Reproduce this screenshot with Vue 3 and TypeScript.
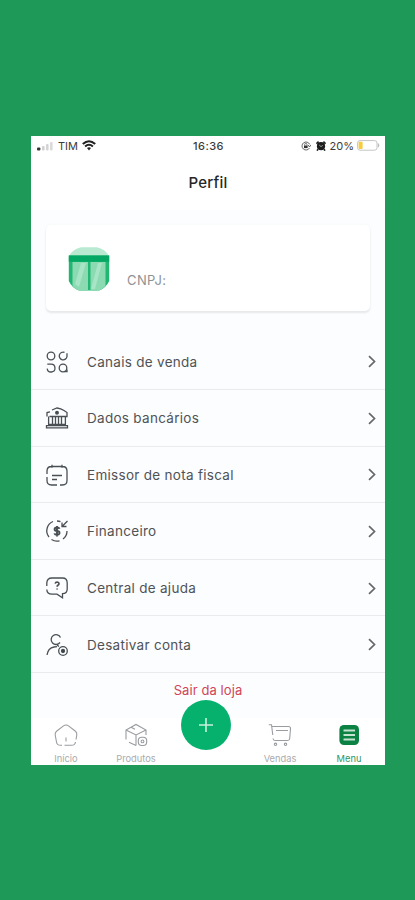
<script setup lang="ts">
interface MenuItem {
  id: string
  label: string
}

const items: MenuItem[] = [
  { id: 'channels', label: 'Canais de venda' },
  { id: 'bank', label: 'Dados bancários' },
  { id: 'invoice', label: 'Emissor de nota fiscal' },
  { id: 'finance', label: 'Financeiro' },
  { id: 'help', label: 'Central de ajuda' },
  { id: 'disable', label: 'Desativar conta' },
]
</script>

<template>
  <div class="page">
    <main class="phone">
      <div class="status">
        <div class="status-left">
          <svg class="signal" viewBox="0 0 17 10">
            <rect x="0" y="6.5" width="3.4" height="3" rx="1" fill="#333" />
            <rect x="5" y="5" width="2.6" height="4.5" rx="1" fill="#d0d0d0" />
            <rect x="9" y="3" width="2.6" height="6.5" rx="1" fill="#d4d4d4" />
            <rect x="13" y="1" width="2.6" height="8.5" rx="1" fill="#dadada" />
          </svg>
          <span class="carrier">TIM</span>
          <svg class="wifi" viewBox="0 0 14 11" fill="none" stroke="#222" stroke-width="2.1">
            <path d="M.8 4.1Q7-1.6 13.2 4.1" />
            <path d="M3.1 6.5Q7 3 10.9 6.5" />
            <path d="M5 8 7 10.4 9 8Q7 6.5 5 8Z" fill="#222" stroke="none" />
          </svg>
        </div>
        <div class="clock">16:36</div>
        <div class="status-right">
          <svg class="lock" viewBox="0 0 10 10" fill="none" stroke="#555">
            <path d="M8.5 7A4 4 0 1 1 8.7 3.4M9.8 4 8.5 6 7.2 4" stroke-width=".9" />
            <rect x="3" y="4.5" width="3.6" height="2.6" fill="#333" stroke="none" />
            <path d="M3.7 4.5V3.4a1.1 1.1 0 0 1 2.2 0v1.1" stroke-width=".8" />
          </svg>
          <svg class="alarm" viewBox="0 0 10 10">
            <circle cx="5" cy="5.2" r="4.1" fill="#1c1c1c" />
            <path d="M.4 2.6 2.6.6M9.6 2.6 7.4.6M2 8.2 1 9.6M8 8.2 9 9.6" stroke="#1c1c1c" stroke-width="1.6" />
            <path d="M3.2 4 5 5.6 6.8 4.4" fill="none" stroke="#bbb" stroke-width=".8" />
          </svg>
          <span class="percent">20%</span>
          <svg class="battery" viewBox="0 0 23 11">
            <rect x=".6" y=".6" width="19.4" height="9.6" rx="2.4" fill="#fff" stroke="#c4c4c4" />
            <rect x="1.6" y="1.7" width="4" height="7.4" rx="1" fill="#f7cb3c" />
            <path d="M21.3 3.6q1.4 1.8 0 3.6z" fill="#aaa" stroke="#aaa" stroke-width=".5" />
          </svg>
        </div>
      </div>

      <header class="title">Perfil</header>

      <div class="content">
        <section class="card">
          <svg class="store" viewBox="0 0 42 44">
            <path d="M1 9Q5 2 13 .3H29Q37 2 41 9Z" fill="#b9ead1" />
            <path d="M.8 8.600H41.200V34Q38 41 31 43.600H11Q4 41 .8 34Z" fill="#22b673" />
            <path d="M4.500 15H20V43.600H11Q7 42 4.500 39Z" fill="#8bdab2" />
            <path d="M22.500 15H37.500V39Q35 42 31 43.600H22.500Z" fill="#8bdab2" />
            <path d="M13 16H18L11 40 7 37ZM30 16H34L27 42H23Z" fill="#a8e4c6" />
            <path d="M.8 8.600H41.200V14.800H.8Z" fill="#05a765" />
          </svg>
          <span class="cnpj">CNPJ:</span>
        </section>

        <nav class="menu">
          <a v-for="item in items" :key="item.id" class="row">
            <svg class="icon" viewBox="0 0 24 24">
              <g v-if="item.id === 'channels'">
                <circle cx="6" cy="6" r="3.800" />
                <path d="M19.500 2.300A3.900 3.900 0 1 0 22 6.500V3.200" />
                <path d="M2.300 14.200H6a3.900 3.900 0 1 1-3.800 4.400" />
                <circle cx="18" cy="18" r="3.800" />
                <path d="M19.500 21.700H22V19.500" />
              </g>
              <g v-else-if="item.id === 'bank'">
                <path d="M2 10.500V6.500l3-.6M7 4l5-2q4 .5 7 2.500l3 2v4H4.500M3.600 10.500V18M7.500 10.500V18M10.500 10.500V18M13.500 10.500V18M16.500 10.500V18M20.400 10.500V18M3 18.300h18M1.500 21.800h21v-2.200H1.500z" />
                <circle cx="12" cy="6.800" r="1.300" fill="#333940" />
              </g>
              <g v-else-if="item.id === 'invoice'">
                <path d="M2 11V8q0-4.500 4.500-4.500h11Q22 3.500 22 8v9.500q0 4.500-4.500 4.500H15M12 22H6.500Q2 22 2 17.500V14M7 1.800v3M17 1.800v3M7 12.500h10M7 16.500h5" />
              </g>
              <g v-else-if="item.id === 'finance'">
                <path d="M8 2.500A10 10 0 0 0 4 18M6.500 20.500a10 10 0 0 0 8 1.300M18 20a10 10 0 0 0 4-8M12 2q2 0 3.500.7M22.500 2 17 7.500M17 3.500v4h4.500" />
                <path d="M14.600 9.800q-.7-1.300-2.600-1.300-2.400 0-2.400 1.700t2.400 1.800 2.500 1.900-2.500 1.800q-2 0-2.700-1.400M12 7v10.500" stroke-width="1.900" />
              </g>
              <g v-else-if="item.id === 'help'">
                <path d="M1.800 10V7Q2 2 7 2h10.500q4.700 0 4.700 5v6q0 4.700-4.700 4.700v4L12 18.200H7Q2 18 1.800 13.500" />
                <path d="M10.200 7.600q.3-1.600 2-1.600 1.800.1 1.800 1.700 0 .9-1.100 1.500-.8.600-.8 1.500M12.100 12.400v1" stroke-width="1.700" />
              </g>
              <g v-else>
                <path d="M15.500 4.500A4.900 4.900 0 1 0 15 9.500M2 22q1-7 7-8l3-.4M12 12l2 1.500" />
                <circle cx="18" cy="18" r="4.300" />
                <circle cx="18" cy="18" r="1.500" fill="#333940" />
              </g>
            </svg>
            <span class="label">{{ item.label }}</span>
            <svg class="chevron" viewBox="0 0 8 13"><path d="M1 1.200 6.500 6.500 1 11.800" /></svg>
          </a>
        </nav>
        <div class="logout">Sair da loja</div>
      </div>

      <footer class="tabs">
        <div class="tab">
          <svg class="tab-icon" viewBox="0 0 24 24">
            <path d="M8 22.300H6.500Q3 22.300 2.500 19L1.200 12Q.8 9.500 2.800 8L9.500 2.900Q12 1 14.500 2.900L21.200 8Q23.200 9.500 22.800 12L22 16.500M21.500 19Q21 22.300 17.500 22.300H10.500M12 14.500v4" />
          </svg>
          <span>Início</span>
        </div>
        <div class="tab">
          <svg class="tab-icon" viewBox="0 0 24 24">
            <path d="M12 22.500 5 19.300M2 16.500V7L12 1.500 22 7v5M2 7l10 5L22 7M7 4.300l4 2M12 12v10.500" />
            <rect x="14.300" y="14.300" width="8.400" height="8.200" rx="3.500" />
            <circle cx="18.500" cy="18.400" r="1.400" />
          </svg>
          <span>Produtos</span>
        </div>
        <div class="tab middle">
          <button class="add" aria-label="+">
            <svg viewBox="0 0 14 14"><path d="M7 0v14M0 7h14" /></svg>
          </button>
        </div>
        <div class="tab">
          <svg class="tab-icon" viewBox="0 0 24 24">
            <path d="M.8 1.800h2.700L4.800 12M5 15.500Q5.200 17.500 7 17.500H19.500Q21.500 17.500 21.700 15.500L22.500 5.500Q22.500 3.500 20.500 3.500H4M8 7.500h12" />
            <circle cx="7.500" cy="21.300" r="1.200" />
            <circle cx="17.500" cy="21.300" r="1.200" />
          </svg>
          <span>Vendas</span>
        </div>
        <div class="tab active">
          <svg class="tab-icon" viewBox="0 0 24 24">
            <rect x="2.400" y="2" width="19.600" height="20" rx="4.500" fill="#0b8142" stroke="none" />
            <path d="M6.500 7.500H18M6.500 12H18M6.500 16.500H18" stroke="#c4e4d1" stroke-width="1.800" />
          </svg>
          <span>Menu</span>
        </div>
      </footer>
    </main>
  </div>
</template>

<style>
body {
  background: #1f9958;
}
</style>

<style scoped>
.page {
  box-sizing: border-box;
  height: 900px;
  padding: 136px 30px 135px 31px;
  background: #1f9958;
  font-family: Inter, sans-serif;
}
.phone {
  display: flex;
  flex-direction: column;
  height: 629px;
  overflow: hidden;
  background: #fff;
}
.status {
  display: grid;
  grid-template-columns: 1fr auto 1fr;
  align-items: center;
  height: 19px;
  flex: none;
  padding: 0 5px 0 6px;
  color: #3c3c3c;
  font-size: 11px;
}
.status-left,
.status-right {
  display: flex;
  align-items: center;
}
.status-right {
  justify-content: flex-end;
}
.signal {
  width: 17px;
  height: 10px;
  margin-right: 4px;
}
.wifi {
  width: 14px;
  height: 11px;
  margin-left: 4px;
}
.clock {
  font-weight: 500;
  letter-spacing: 0.45px;
}
.lock {
  width: 10px;
  height: 10px;
  margin-right: 5px;
}
.alarm {
  width: 10px;
  height: 10px;
  margin-right: 4px;
}
.battery {
  width: 23px;
  height: 11px;
  margin-left: 3px;
}
.title {
  display: flex;
  align-items: center;
  justify-content: center;
  flex: none;
  height: 55px;
  color: #262626;
  font-size: 15px;
  font-weight: 500;
  letter-spacing: 0.2px;
}
.content {
  flex: none;
  height: 508px;
  background: #fbfdfe;
}
.card {
  display: flex;
  box-sizing: border-box;
  height: 86px;
  margin: 15px 15px 22.4px;
  padding: 22px 0 0 22px;
  border-radius: 5px;
  background: #fff;
  box-shadow: 0 2px 2px #e6e8e9, 0 0 3px #f3f5f6;
}
.store {
  width: 42px;
  height: 44px;
}
.cnpj {
  margin: 25px 0 0 17px;
  color: #8f9193;
  font-size: 13px;
  line-height: 16px;
  letter-spacing: 0.4px;
}
.row {
  display: flex;
  align-items: center;
  box-sizing: border-box;
  height: 56.6px;
  padding: 1px 9px 0 14px;
  border-bottom: 1px solid #e9ebed;
}
.icon {
  width: 24px;
  height: 24px;
  margin-right: 18px;
  fill: none;
  stroke: #4a4f54;
  stroke-width: 1.3;
}
.label {
  flex: 1;
  color: #505356;
  font-size: 13.5px;
  letter-spacing: 0.29px;
}
.chevron {
  width: 8px;
  height: 13px;
  fill: none;
  stroke: #64686b;
  stroke-width: 1.7;
}
.logout {
  margin-top: 8px;
  color: #d04557;
  font-size: 13px;
  line-height: 18px;
  letter-spacing: 0.08px;
  text-align: center;
}
.tabs {
  display: grid;
  grid-template-columns: 70px 70px 70px 78px 60px;
  height: 47px;
  flex: none;
  background: #fff;
}
.tab {
  display: flex;
  flex-direction: column;
  align-items: center;
  color: #a9abae;
  font-size: 9.3px;
  line-height: 12px;
}
.tab-icon {
  flex: none;
  width: 24px;
  height: 24px;
  margin: 5px 0 6px;
  fill: none;
  stroke: #999ca0;
  stroke-width: 1.1;
}
.active {
  color: #2d9663;
}
.add {
  display: flex;
  align-items: center;
  justify-content: center;
  width: 50px;
  height: 50px;
  flex: none;
  margin-top: -18px;
  padding: 0;
  border: 0;
  border-radius: 50%;
  background: #06b16e;
}
.add svg {
  width: 14px;
  height: 14px;
  stroke: #c9f0de;
  stroke-width: 1.6;
}
</style>
